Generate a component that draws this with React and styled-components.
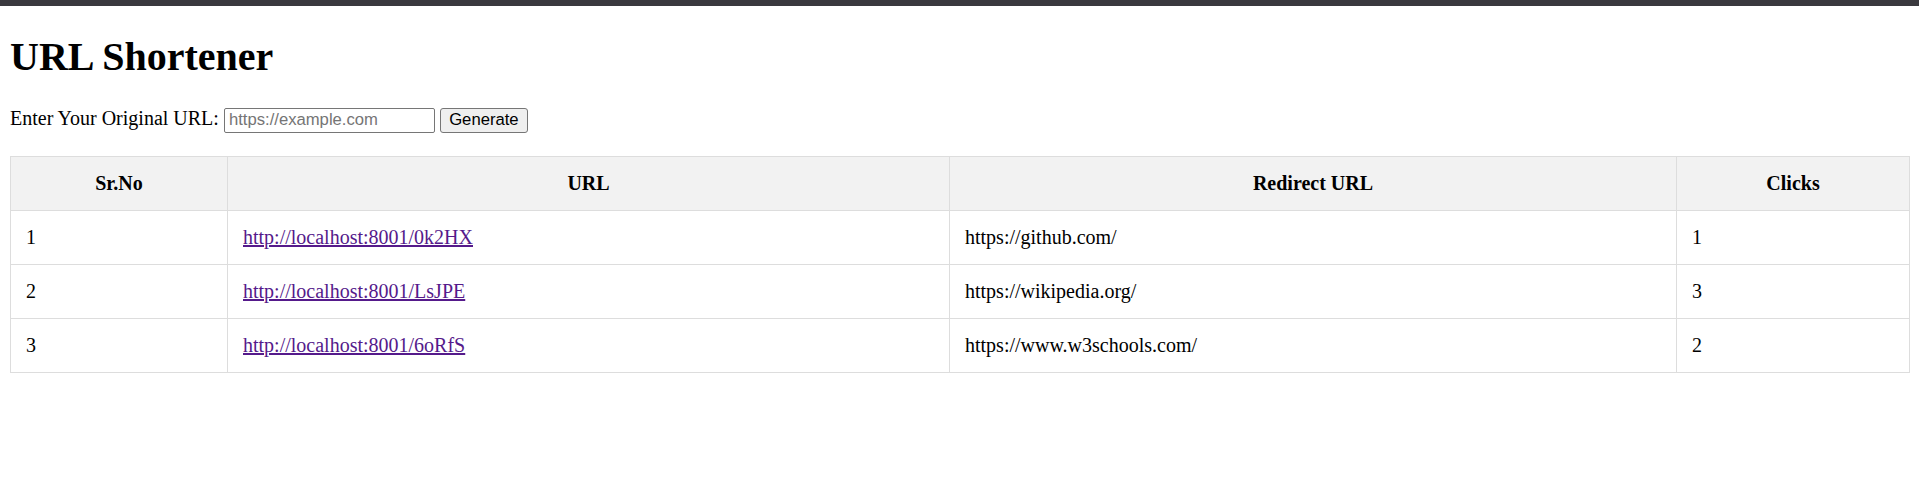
import React from 'react'
import styled, { createGlobalStyle } from "styled-components";

const GlobalStyle = createGlobalStyle`
  html, body {
    margin: 0;
    background: #fff;
  }
  body {
    font-family: "Liberation Serif", "Times New Roman", serif;
    font-size: 20px;
    color: #000;
  }
`

const TopBar = styled.div`
  height: 6px;
  background: #3a393e;
`

const Page = styled.div`
  padding: 0 10px;
`

const Title = styled.h1`
  font-size: 40px;
  font-weight: bold;
  margin: 26.8px 0;
  line-height: normal;
`

const Form = styled.form`
  margin: 0;
  line-height: 23px;
`

const UrlInput = styled.input`
  box-sizing: border-box;
  width: 211px;
  height: 25px;
  padding: 0 4px;
  margin: 0;
  border: 1px solid #767676;
  border-radius: 2px;
  font-family: "Liberation Sans", Arial, sans-serif;
  font-size: 16.67px;
  color: #000;
  vertical-align: middle;
  &::placeholder {
    color: #757575;
  }
`

const Button = styled.button`
  box-sizing: border-box;
  width: 88px;
  height: 25px;
  padding: 0;
  margin: 0;
  border: 1px solid #767676;
  border-radius: 3px;
  background: #efefef;
  font-family: "Liberation Sans", Arial, sans-serif;
  font-size: 16.67px;
  color: #000;
  vertical-align: middle;
`

const Table = styled.table`
  width: 100%;
  table-layout: fixed;
  border-collapse: collapse;
  margin-top: 23px;
`

const Th = styled.th`
  box-sizing: border-box;
  width: ${props => props.w}px;
  background: #f2f2f2;
  border: 1px solid #ddd;
  padding: 15px;
  line-height: 23px;
  font-weight: bold;
  text-align: center;
`

const Td = styled.td`
  border: 1px solid #ddd;
  padding: 15px;
  line-height: 23px;
  text-align: left;
`

const ShortLink = styled.a`
  color: #551a8b;
  text-decoration: underline;
`

const rows = [
  { id: 'http://localhost:8001/0k2HX', redirect: 'https://github.com/', clicks: 1 },
  { id: 'http://localhost:8001/LsJPE', redirect: 'https://wikipedia.org/', clicks: 3 },
  { id: 'http://localhost:8001/6oRfS', redirect: 'https://www.w3schools.com/', clicks: 2 },
]

export default function App() {
  return (
    <>
      <GlobalStyle />
      <TopBar />
      <Page>
        <Title>URL Shortener</Title>
        <Form onSubmit={e => e.preventDefault()}>
          Enter Your Original URL: <UrlInput type="text" placeholder="https://example.com" /> <Button type="submit">Generate</Button>
        </Form>
        <Table>
          <thead>
            <tr>
              <Th w={217}>Sr.No</Th>
              <Th w={722}>URL</Th>
              <Th w={727}>Redirect URL</Th>
              <Th w={233}>Clicks</Th>
            </tr>
          </thead>
          <tbody>
            {rows.map((row, i) => (
              <tr key={row.id}>
                <Td>{i + 1}</Td>
                <Td><ShortLink href={row.id}>{row.id}</ShortLink></Td>
                <Td>{row.redirect}</Td>
                <Td>{row.clicks}</Td>
              </tr>
            ))}
          </tbody>
        </Table>
      </Page>
    </>
  );
}
